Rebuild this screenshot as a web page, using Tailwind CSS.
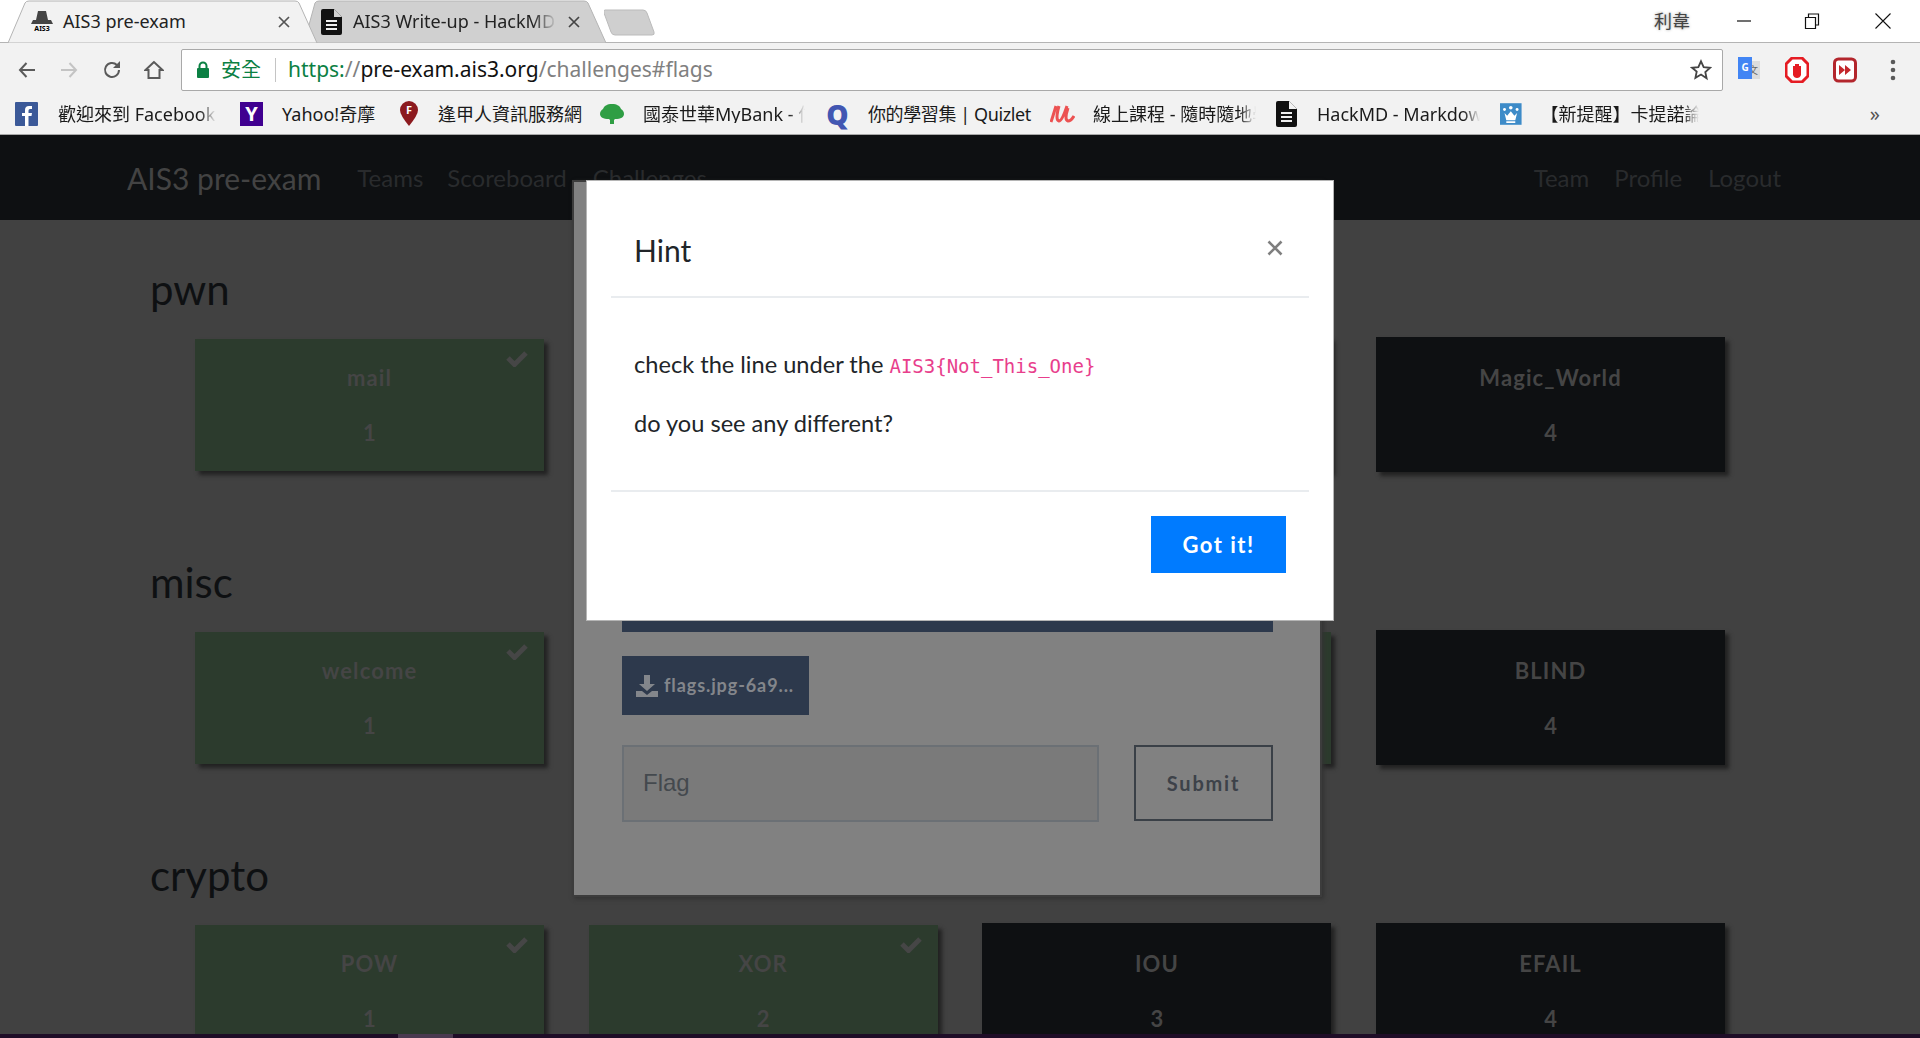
<!DOCTYPE html>
<html lang="en">
<head>
    <meta charset="UTF-8">
    <meta name="viewport" content="width=device-width, initial-scale=1.0">
    <title>AIS3 pre-exam</title>
    <script src="https://cdn.jsdelivr.net/npm/@tailwindcss/browser@4"></script>
</head>
<body class="relative flex flex-col w-[1920px] h-[1038px] overflow-hidden bg-[#414141] font-['Lato','Noto_Sans_CJK_TC',sans-serif]">

    <!-- browser chrome -->
    <header class="shrink-0 h-[135px] bg-[#f2f2f2] border-b border-[#a8a8a8] font-['Noto_Sans','Noto_Sans_CJK_TC',sans-serif] text-[#1a1a1a]">
        <!-- tab strip -->
        <div class="flex items-stretch h-[43px] bg-white border-b border-[#b4b4b4]">
            <div class="relative z-10 flex items-center w-[310px] ml-[8px] h-[43px] pl-[22px]">
                <svg class="absolute left-0 top-0 w-full h-[43px]" viewBox="0 0 310 43" preserveAspectRatio="none"><path d="M0 43 L17 3 Q18 1 21 1 L287 1 Q290 1 291 3 L309 43 Z" fill="#f2f2f2" stroke="#b4b4b4"/></svg>
                <div class="relative flex flex-col items-center w-[24px] text-black">
                    <svg class="w-[22px] h-[14px]" viewBox="0 0 22 14"><path d="M7 0h8l2 9h3l2 4H0l2-4h3z" fill="#444"/></svg>
                    <span class="text-[7px] leading-[8px] font-bold">AIS3</span>
                </div>
                <span class="relative ml-[9px] text-[18px] text-[#222]">AIS3 pre-exam</span>
                <svg class="absolute left-[270px] top-[16px] w-[12px] h-[12px]" viewBox="0 0 12 12"><path d="M1 1l10 10M11 1L1 11" stroke="#555" stroke-width="1.7"/></svg>
            </div>
            <div class="relative flex items-center w-[304px] -ml-[14px] h-[43px] pl-[15px]">
                <svg class="absolute left-0 top-0 w-full h-[43px]" viewBox="0 0 304 43" preserveAspectRatio="none"><path d="M0 43 L11 3 Q12 1 15 1 L280 1 Q283 1 284 3 L302 43 Z" fill="#d0d0d0" stroke="#b4b4b4"/></svg>
                <svg class="relative w-[21px] h-[26px] ml-[2px]" viewBox="0 0 21 26"><path d="M2 0h11l8 8v16a2 2 0 0 1-2 2H2a2 2 0 0 1-2-2V2a2 2 0 0 1 2-2z" fill="#111"/><path d="M13 0v8h8" fill="#d0d0d0"/><path d="M5 12h11M5 16h11M5 20h11" stroke="#eee" stroke-width="1.8"/></svg>
                <span class="relative ml-[11px] w-[204px] overflow-hidden whitespace-nowrap text-[18px] text-[#222] [mask-image:linear-gradient(to_right,black_88%,transparent)]">AIS3 Write-up - HackMD - Markdown</span>
                <svg class="absolute left-[264px] top-[16px] w-[12px] h-[12px]" viewBox="0 0 12 12"><path d="M1 1l10 10M11 1L1 11" stroke="#444" stroke-width="1.7"/></svg>
            </div>
            <svg class="ml-[-4px] mt-[9px] w-[52px] h-[27px]" viewBox="0 0 52 27"><path d="M1 1h38q3 0 4 3l7 19q1 3-2 3H11q-3 0-4-3L0 4q-1-3 1-3z" fill="#cfcfcf" stroke="#bbb"/></svg>
            <div class="flex-1"></div>
            <span class="self-center text-[18px] leading-none text-[#444] [text-shadow:0_0_3px_#999]">利韋</span>
            <div class="flex items-center pl-[47px] pr-[29px]">
                <svg class="w-[14px] h-[14px]" viewBox="0 0 14 14"><path d="M0 7h14" stroke="#111" stroke-width="1.2"/></svg>
                <svg class="ml-[53px] w-[16px] h-[16px]" viewBox="0 0 16 16"><path d="M1.500 4.500h10v11h-10zM4.500 4.500v-3.500h10v11h-3" fill="none" stroke="#111" stroke-width="1.200"/></svg>
                <svg class="ml-[55px] w-[16px] h-[16px]" viewBox="0 0 16 16"><path d="M0.500 0.500l15 15M15.500 0.500l-15 15" stroke="#111" stroke-width="1.100"/></svg>
            </div>
        </div>
        <!-- address row -->
        <div class="flex items-center h-[48px] pt-[6px] pl-[18px]">
            <svg class="w-[18px] h-[18px]" viewBox="0 0 18 18"><path d="M17 9H2M8.500 2L2 9l6.500 7" fill="none" stroke="#5a5a5a" stroke-width="2"/></svg>
            <svg class="ml-[24px] w-[18px] h-[18px]" viewBox="0 0 18 18"><path d="M1 9h15M9.500 2L16 9l-6.500 7" fill="none" stroke="#c4c4c4" stroke-width="2"/></svg>
            <svg class="ml-[24px] w-[20px] h-[20px]" viewBox="0 0 20 20"><path d="M17 10a7 7 0 1 1-2.100-5" fill="none" stroke="#5a5a5a" stroke-width="2"/><path d="M18 1v7h-7z" fill="#5a5a5a"/></svg>
            <svg class="ml-[22px] w-[20px] h-[20px]" viewBox="0 0 20 20"><path d="M10 2L1.500 10H4.500V18H15.500V10H18.500Z" fill="none" stroke="#5a5a5a" stroke-width="2"/></svg>
            <div class="flex items-center w-[1542px] h-[42px] ml-[17px] bg-white border border-[#a9a9a9] rounded-[2px] pl-[14px] pr-[10px]">
                <svg class="w-[14px] h-[18px]" viewBox="0 0 14 18"><path d="M3.500 8V5a3.500 3.500 0 0 1 7 0v3" fill="none" stroke="#0b8043" stroke-width="2"/><rect x="1" y="7" width="12" height="10" rx="1" fill="#0b8043"/></svg>
                <span class="ml-[11px] text-[20px] text-[#0b8043]">安全</span>
                <span class="ml-[14px] w-px h-[24px] bg-[#c4c4c4]"></span>
                <span class="ml-[12px] text-[21px] whitespace-nowrap text-[#808080]"><span class="text-[#0b8043]">https:</span>//<span class="text-[#111]">pre-exam.ais3.org</span>/challenges#flags</span>
                <div class="flex-1"></div>
                <svg class="w-[22px] h-[22px]" viewBox="0 0 24 24"><path d="M12 2.500l2.900 6.300 6.900.8-5.100 4.700 1.400 6.800L12 17l-6.100 3.600 1.400-6.800L2.200 9.600l6.900-.8z" fill="none" stroke="#444" stroke-width="2"/></svg>
            </div>
            <div class="relative w-[20px] h-[26px] ml-[15px]">
                <div class="absolute left-[8px] top-[4px] w-[14px] h-[18px] bg-[#dcdcdc] text-[10px] leading-[18px] text-center text-[#666]">文</div>
                <div class="absolute left-0 top-0 w-[14px] h-[22px] bg-[#4285f4] text-[10px] font-bold leading-[20px] text-center text-white">G</div>
            </div>
            <svg class="ml-[27px] w-[24px] h-[26px]" viewBox="0 0 24 26"><path d="M7 1h10l6 6v12l-6 6H7l-6-6V7z" fill="#fff" stroke="#e51c23" stroke-width="3"/><path d="M8 18V9h2v5-7h2v7-7h2v7-5h2v9q-1 3-4 3t-4-3z" fill="#e51c23"/></svg>
            <svg class="ml-[24px] w-[24px] h-[26px]" viewBox="0 0 24 26"><rect x="1.500" y="2" width="21" height="22" rx="4" fill="#fff" stroke="#b3262c" stroke-width="3"/><path d="M6 8l6 5-6 5zM12 8l6 5-6 5z" fill="#c3272b"/></svg>
            <svg class="ml-[33px] w-[6px] h-[22px]" viewBox="0 0 6 22"><circle cx="3" cy="3" r="2.300" fill="#5a5a5a"/><circle cx="3" cy="11" r="2.300" fill="#5a5a5a"/><circle cx="3" cy="19" r="2.300" fill="#5a5a5a"/></svg>
        </div>
        <!-- bookmarks -->
        <div class="flex items-center h-[43px] pt-[2px] pl-[15px] text-[18px] leading-none whitespace-nowrap">
            <div class="flex items-center w-[225px]">
                <div class="relative w-[23px] h-[24px] bg-[#3b5998] overflow-hidden rounded-[1px]"><svg class="absolute left-[5px] top-[3px] w-[14px] h-[21px]" viewBox="0 0 14 21"><path d="M5 21V11H2V8h3V5q0-4 4-4h3v3h-2q-1.500 0-1.500 1.500V8h3.500l-.5 3h-3v10z" fill="#fff"/></svg></div>
                <span class="ml-[20px] w-[158px] overflow-hidden [mask-image:linear-gradient(to_right,black_90%,transparent)]">歡迎來到 Facebook</span>
            </div>
            <div class="flex items-center w-[158px]">
                <div class="w-[23px] h-[24px] bg-[#400090] text-white text-[20px] font-bold leading-[24px] text-center">Y</div>
                <span class="ml-[19px]">Yahoo!奇摩</span>
            </div>
            <div class="flex items-center w-[202px]">
                <div class="relative w-[18px] h-[25px] ml-[2px]">
                    <svg class="absolute inset-0 w-full h-full" viewBox="0 0 18 25"><path d="M9 25Q0 14 0 9a9 9 0 0 1 18 0q0 5-9 16z" fill="#8c1a1f"/></svg>
                    <span class="absolute left-0 top-[3px] w-full text-center text-[11px] font-bold leading-[12px] text-white">F</span>
                </div>
                <span class="ml-[20px]">逢甲人資訊服務網</span>
            </div>
            <div class="flex items-center w-[225px]">
                <svg class="w-[24px] h-[20px]" viewBox="0 0 24 20"><path d="M12 0c5 0 8 2 9 5 2 1 3 3 3 5 0 3-3 5-9 5l-1 1v4h-4v-4l-1-1C3 15 0 13 0 10c0-2 1-4 3-5 1-3 4-5 9-5z" fill="#2f9e44"/></svg>
                <span class="ml-[19px] w-[162px] overflow-hidden [mask-image:linear-gradient(to_right,black_90%,transparent)]">國泰世華MyBank - 信用卡</span>
            </div>
            <div class="flex items-center w-[225px]">
                <div class="w-[25px] text-[#4257b2] text-[28px] font-black leading-[24px] text-center">Q</div>
                <span class="ml-[18px] tracking-[-0.4px]">你的學習集 | Quizlet</span>
            </div>
            <div class="flex items-center w-[226px]">
                <svg class="w-[25px] h-[22px]" viewBox="0 0 25 22"><path d="M6 3Q3 13 1 19M9 3Q5 17 9 18q3 0 8-15M18 5q-4 12 0 13 3 0 6-5" fill="none" stroke="#ec5252" stroke-width="3"/></svg>
                <span class="ml-[18px] w-[163px] overflow-hidden [mask-image:linear-gradient(to_right,black_90%,transparent)]">線上課程 - 隨時隨地學習</span>
            </div>
            <div class="flex items-center w-[224px]">
                <svg class="w-[21px] h-[26px]" viewBox="0 0 21 26"><path d="M2 0h11l8 8v16a2 2 0 0 1-2 2H2a2 2 0 0 1-2-2V2a2 2 0 0 1 2-2z" fill="#111"/><path d="M13 0v8h8" fill="#f2f2f2"/><path d="M5 12h11M5 16h11M5 20h11" stroke="#eee" stroke-width="1.800"/></svg>
                <span class="ml-[20px] w-[163px] overflow-hidden [mask-image:linear-gradient(to_right,black_90%,transparent)]">HackMD - Markdown</span>
            </div>
            <div class="flex items-center w-[380px]">
                <svg class="w-[24px] h-[24px]" viewBox="0 0 24 24"><rect width="24" height="24" fill="#3d8bc8"/><circle cx="12" cy="5" r="2" fill="#fff"/><circle cx="5" cy="7" r="1.600" fill="#fff"/><circle cx="19" cy="7" r="1.600" fill="#fff"/><path d="M5 11l3 3 4-5 4 5 3-3-2 8H7zM7 20h10v2H7z" fill="#fff"/></svg>
                <span class="ml-[19px] w-[176px] overflow-hidden [mask-image:linear-gradient(to_right,black_90%,transparent)]">【新提醒】卡提諾論壇</span>
                <span class="ml-[171px] text-[#555] text-[20px]">»</span>
            </div>
        </div>
    </header>

    <!-- page navbar -->
    <nav class="shrink-0 flex items-center h-[85px] pt-[1px] pl-[127px] pr-[139px] bg-[#0e1012] text-[24px] text-[#292b2d]">
        <a class="text-[30px] text-[#434343] mr-[36px]">AIS3 pre-exam</a>
        <a class="mr-[24px]">Teams</a>
        <a class="mr-[26px]">Scoreboard</a>
        <a>Challenges</a>
        <div class="flex-1"></div>
        <a class="mr-[25px]">Team</a>
        <a class="mr-[26px]">Profile</a>
        <a>Logout</a>
    </nav>

    <!-- challenges -->
    <main class="relative flex-1 overflow-hidden">
        <section class="h-[293px] pt-[45px] pl-[150px]">
            <h2 class="text-[42px] leading-[48px] text-[#0e1012]">pwn</h2>
            <div class="grid grid-cols-[repeat(4,349px)] gap-x-[44.700px] mt-[24px] ml-[45px]">
                <div class="relative flex flex-col items-center self-start h-[132px] mt-[2px] pt-[22px] bg-[#2c3b2d] shadow-[4px_4px_4px_#222] text-[#454545]">
                    <svg class="absolute right-[16px] top-[11px] w-[22px] h-[17px]" viewBox="0 0 22 17"><path d="M2 8l6.500 6.500L20 3" fill="none" stroke="#464646" stroke-width="5"/></svg>
                    <span class="text-[22px] leading-[33px] font-bold tracking-[1.100px]">mail</span>
                    <span class="mt-[22px] text-[22px] leading-[33px] font-bold">1</span>
                </div>
                <div class="h-[132px] mt-[2px] bg-[#2c3b2d]"></div>
                <div class="h-[135px] bg-[#0e1012] shadow-[4px_4px_4px_#222]"></div>
                <div class="flex flex-col items-center h-[135px] pt-[24px] bg-[#0e1012] shadow-[4px_4px_4px_#222] text-[#454545]">
                    <span class="text-[22px] leading-[33px] font-bold tracking-[1.100px]">Magic_World</span>
                    <span class="mt-[22px] text-[22px] leading-[33px] font-bold">4</span>
                </div>
            </div>
        </section>
        <section class="h-[293px] pt-[45px] pl-[150px]">
            <h2 class="text-[42px] leading-[48px] text-[#0e1012]">misc</h2>
            <div class="grid grid-cols-[repeat(4,349px)] gap-x-[44.700px] mt-[24px] ml-[45px]">
                <div class="relative flex flex-col items-center self-start h-[132px] mt-[2px] pt-[22px] bg-[#2c3b2d] shadow-[4px_4px_4px_#222] text-[#454545]">
                    <svg class="absolute right-[16px] top-[11px] w-[22px] h-[17px]" viewBox="0 0 22 17"><path d="M2 8l6.500 6.500L20 3" fill="none" stroke="#464646" stroke-width="5"/></svg>
                    <span class="text-[22px] leading-[33px] font-bold tracking-[1.100px]">welcome</span>
                    <span class="mt-[22px] text-[22px] leading-[33px] font-bold">1</span>
                </div>
                <div class="h-[132px] mt-[2px] bg-[#2c3b2d]"></div>
                <div class="h-[132px] mt-[2px] bg-[#2c3b2d] shadow-[4px_4px_4px_#222]"></div>
                <div class="flex flex-col items-center h-[135px] pt-[24px] bg-[#0e1012] shadow-[4px_4px_4px_#222] text-[#454545]">
                    <span class="text-[22px] leading-[33px] font-bold tracking-[1.100px]">BLIND</span>
                    <span class="mt-[22px] text-[22px] leading-[33px] font-bold">4</span>
                </div>
            </div>
        </section>
        <section class="h-[293px] pt-[45px] pl-[150px]">
            <h2 class="text-[42px] leading-[48px] text-[#0e1012]">crypto</h2>
            <div class="grid grid-cols-[repeat(4,349px)] gap-x-[44.700px] mt-[24px] ml-[45px]">
                <div class="relative flex flex-col items-center self-start h-[132px] mt-[2px] pt-[22px] bg-[#2c3b2d] shadow-[4px_4px_4px_#222] text-[#454545]">
                    <svg class="absolute right-[16px] top-[11px] w-[22px] h-[17px]" viewBox="0 0 22 17"><path d="M2 8l6.500 6.500L20 3" fill="none" stroke="#464646" stroke-width="5"/></svg>
                    <span class="text-[22px] leading-[33px] font-bold tracking-[1.100px]">POW</span>
                    <span class="mt-[22px] text-[22px] leading-[33px] font-bold">1</span>
                </div>
                <div class="relative flex flex-col items-center self-start h-[132px] mt-[2px] pt-[22px] bg-[#2c3b2d] shadow-[4px_4px_4px_#222] text-[#454545]">
                    <svg class="absolute right-[16px] top-[11px] w-[22px] h-[17px]" viewBox="0 0 22 17"><path d="M2 8l6.500 6.500L20 3" fill="none" stroke="#464646" stroke-width="5"/></svg>
                    <span class="text-[22px] leading-[33px] font-bold tracking-[1.100px]">XOR</span>
                    <span class="mt-[22px] text-[22px] leading-[33px] font-bold">2</span>
                </div>
                <div class="flex flex-col items-center h-[135px] pt-[24px] bg-[#0e1012] shadow-[4px_4px_4px_#222] text-[#454545]">
                    <span class="text-[22px] leading-[33px] font-bold tracking-[1.100px]">IOU</span>
                    <span class="mt-[22px] text-[22px] leading-[33px] font-bold">3</span>
                </div>
                <div class="flex flex-col items-center h-[135px] pt-[24px] bg-[#0e1012] shadow-[4px_4px_4px_#222] text-[#454545]">
                    <span class="text-[22px] leading-[33px] font-bold tracking-[1.100px]">EFAIL</span>
                    <span class="mt-[22px] text-[22px] leading-[33px] font-bold">4</span>
                </div>
            </div>
        </section>
    </main>

    <!-- desktop edge under the window -->
    <div class="absolute left-0 bottom-0 flex w-full h-[4px] bg-[#1f0d27]">
        <div class="ml-[398px] w-[55px] bg-[#4a3a50]"></div>
    </div>

    <!-- challenge modal, dimmed -->
    <div class="absolute left-[572px] top-[180px] w-[750px] h-[717px] pl-[48px] pr-[47px] bg-[#818181] border-2 border-[#3c3c3c] shadow-[2px_2px_4px_#333]">
        <div class="h-[450px] bg-[#2d394c]"></div>
        <button class="flex items-center w-[187px] h-[59px] mt-[24px] pl-[14px] bg-[#2d394c] text-[18px] font-bold tracking-[0.9px] text-[#83868b] whitespace-nowrap">
            <svg class="w-[22px] h-[22px] mr-[6px]" viewBox="0 0 22 22"><path d="M8 0h6v9h5l-8 7-8-7h5zM0 16h6l5 4 5-4h6v6H0z" fill="#83868b"/></svg>
            flags.jpg-6a9...
        </button>
        <div class="flex justify-between mt-[30px]">
            <input class="w-[477px] h-[77px] px-[19px] pb-[2px] bg-[#7a7a7a] border-2 border-[#6b7075] font-['Liberation_Sans',sans-serif] text-[24px] placeholder:text-[#44494e]" placeholder="Flag">
            <button class="w-[139px] h-[76px] border-2 border-[#3a4047] text-[20px] font-bold tracking-[1.800px] text-[#3d4249]">Submit</button>
        </div>
    </div>

    <!-- hint modal -->
    <div class="absolute left-[586px] top-[180px] flex flex-col w-[748px] h-[441px] px-[24px] bg-white border border-[#b5b5b5] text-[#212529]">
        <div class="relative flex items-center h-[117px] pl-[23px] border-b-2 border-[#e9ecef]">
            <h5 class="mt-[23px] text-[30px] leading-[45px] text-[#212529]">Hint</h5>
            <svg class="absolute right-[26px] top-[59px] w-[16px] h-[16px]" viewBox="0 0 16 16"><path d="M1.500 1.500l13 13M14.500 1.500l-13 13" stroke="#7f7f7f" stroke-width="2.600"/></svg>
        </div>
        <div class="h-[192px] pt-[50px] pl-[23px] text-[23.600px] leading-[33px]">
            <p>check the line under the <code class="font-['DejaVu_Sans_Mono',monospace] text-[19px] text-[#e83e8c]">AIS3{Not_This_One}</code></p>
            <p class="mt-[24px]">do you see any different?</p>
        </div>
        <div class="flex justify-end pt-[24px] pr-[23px] border-t-2 border-[#e9ecef]">
            <button class="w-[135px] h-[57px] bg-[#007bff] text-[22px] font-bold tracking-[1.500px] text-white">Got it!</button>
        </div>
    </div>

</body>
</html>
